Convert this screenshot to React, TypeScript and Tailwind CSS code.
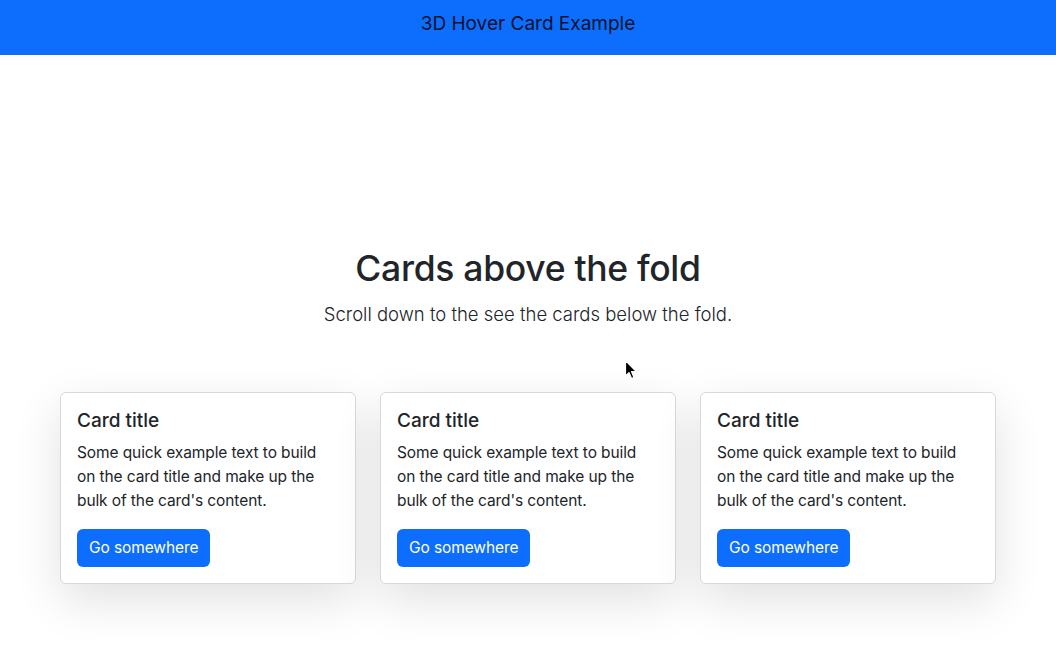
const cards = [1, 2, 3];

function Cursor() {
  return (
    <svg
      className="pointer-events-none absolute left-[624px] top-[359px]"
      width="14"
      height="22"
      viewBox="0 0 14 22"
    >
      <path
        d="M1.5 1.5 L1.5 17 L5 13.6 L7.6 19.5 L10 18.4 L7.5 12.6 L12.3 12.6 Z"
        fill="#000"
        stroke="#fff"
        strokeWidth="1.2"
        strokeLinejoin="round"
      />
    </svg>
  );
}

function Card() {
  return (
    <div className="w-[296px] rounded-[6px] border border-[#d6d8db] bg-white p-4 shadow-[0_16px_48px_rgba(0,0,0,0.12)]">
      <h5 className="mb-2 text-[19px] font-medium leading-[24px] text-[#212529]">Card title</h5>
      <p className="mb-4 pr-3 text-[15.5px] leading-[24px] tracking-[-0.1px] text-[#212529]">
        Some quick example text to build on the card title and make up the bulk of the card's
        content.
      </p>
      <button
        type="button"
        className="h-[38px] rounded-[6px] bg-[#0d6efd] px-3 text-[15.5px] leading-[24px] tracking-[-0.1px] text-white"
      >
        Go somewhere
      </button>
    </div>
  );
}

export default function App() {
  return (
    <div className="relative min-h-[652px] bg-white font-['Inter',sans-serif] text-[#212529]">
      <nav className="flex h-[55px] justify-center bg-[#0d6efd] pt-[9px]">
        <span className="text-[19px] leading-[30px] text-[#06122b]">3D Hover Card Example</span>
      </nav>

      <main className="flex flex-col items-center pt-[194px]">
        <h1 className="text-[35.5px] font-medium leading-[40px] tracking-[-0.3px]">
          Cards above the fold
        </h1>
        <p className="mt-[11px] text-[18.5px] font-light leading-[28px]">
          Scroll down to the see the cards below the fold.
        </p>

        <div className="mt-[64px] flex w-[936px] gap-[24px]">
          {cards.map((c) => (
            <Card key={c} />
          ))}
        </div>
      </main>

      <Cursor />
    </div>
  );
}
